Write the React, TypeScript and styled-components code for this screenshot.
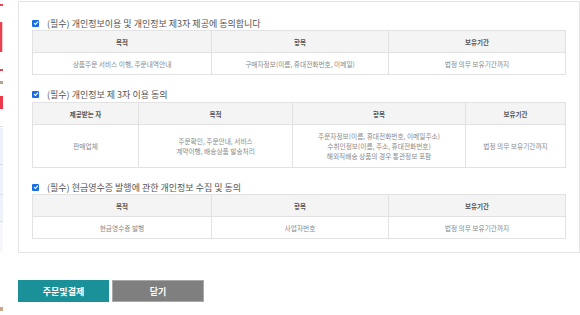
import React from "react";
import styled, { createGlobalStyle } from "styled-components";

const Global = createGlobalStyle`
  html, body { margin: 0; padding: 0; background: #fff; }
  body { font-family: "Noto Sans CJK KR", "Noto Sans", sans-serif; }
  * { box-sizing: border-box; }
`;

const Page = styled.div`
  display: flex;
  width: 580px;
  height: 315px;
  overflow: hidden;
`;

const Strip = styled.div`
  width: 3px;
  flex: none;
  display: flex;
  flex-direction: column;
  overflow: hidden;
`;

const StripBlock = styled.div<{ $h: number; $bg: string; $mt: number; $border?: string }>`
  height: ${(p) => p.$h}px;
  margin-top: ${(p) => p.$mt}px;
  background: ${(p) => p.$bg};
  border-left: ${(p) => (p.$border ? `2px solid ${p.$border}` : "none")};
  flex: none;
`;

const Main = styled.div`
  margin-left: 15px;
  width: 562px;
  padding-top: 1px;
  display: flex;
  flex-direction: column;
`;

const Panel = styled.div`
  border: 1px solid #e4e4e4;
  padding: 14px 13px 13px;
  display: flex;
  flex-direction: column;
  gap: 12px;
`;

const Section = styled.div`
  display: flex;
  flex-direction: column;
`;

const Title = styled.div<{ $gap: number }>`
  display: flex;
  align-items: center;
  height: 14px;
  gap: 8px;
  margin-bottom: ${(p) => p.$gap}px;
  font-size: 9px;
  color: #555;
  white-space: nowrap;
`;

const Check = styled.span`
  width: 7px;
  height: 7px;
  border-radius: 1px;
  background: #1a6fe6;
  display: inline-flex;
  align-items: center;
  justify-content: center;
  flex: none;
`;

const Table = styled.table`
  width: 533px;
  border-collapse: collapse;
  table-layout: fixed;
`;

const Col = styled.col<{ $w: number }>`
  width: ${(p) => p.$w}px;
`;

const Th = styled.th<{ $h: number }>`
  height: ${(p) => p.$h}px;
  background: #f4f4f4;
  border: 1px solid #e2e2e2;
  font-size: 6.5px;
  font-weight: 700;
  color: #555;
  text-align: center;
  padding: 0;
`;

const Td = styled.td<{ $h: number }>`
  height: ${(p) => p.$h}px;
  border: 1px solid #e2e2e2;
  font-size: 6.7px;
  line-height: 10px;
  color: #888;
  text-align: center;
  padding: 0;
  background: #fff;
`;

const Buttons = styled.div`
  display: flex;
  gap: 3px;
  margin-top: 27px;
`;

const Button = styled.button<{ $variant: "primary" | "close" }>`
  width: ${(p) => (p.$variant === "primary" ? 91 : 92)}px;
  height: 22px;
  border: 1px solid ${(p) => (p.$variant === "primary" ? "#1a9098" : "#a9a9a9")};
  background: ${(p) => (p.$variant === "primary" ? "#1a9098" : "#7f7f7f")};
  color: #fff;
  font-family: "Noto Sans CJK KR", sans-serif;
  font-size: 9px;
  font-weight: 700;
  padding: 0;
  cursor: pointer;
`;

const CheckBox = () => (
  <Check>
    <svg width="6" height="6" viewBox="0 0 10 10">
      <path d="M1.8 5.2 L4 7.4 L8.3 2.6" fill="none" stroke="#fff" strokeWidth="1.8" />
    </svg>
  </Check>
);

type Cell = React.ReactNode;

const InfoTable = ({
  cols,
  heads,
  cells,
  headH,
  bodyH,
}: {
  cols: number[];
  heads: string[];
  cells: Cell[];
  headH: number;
  bodyH: number;
}) => (
  <Table>
    <colgroup>
      {cols.map((w, i) => (
        <Col key={i} $w={w} />
      ))}
    </colgroup>
    <thead>
      <tr>
        {heads.map((h) => (
          <Th key={h} $h={headH}>
            {h}
          </Th>
        ))}
      </tr>
    </thead>
    <tbody>
      <tr>
        {cells.map((c, i) => (
          <Td key={i} $h={bodyH}>
            {c}
          </Td>
        ))}
      </tr>
    </tbody>
  </Table>
);

export default function App() {
  return (
    <>
      <Global />
      <Page>
        <Strip>
          <StripBlock $mt={4} $h={2} $bg="#e8414f" />
          <StripBlock $mt={16} $h={30} $bg="#f6c9cd" $border="#e8414f" />
          <StripBlock $mt={17} $h={2} $bg="#e8414f" />
          <StripBlock $mt={10} $h={3} $bg="#b9a48e" />
          <StripBlock $mt={12} $h={13} $bg="#ec3a4a" />
          <StripBlock $mt={17} $h={1} $bg="#dcdcdc" />
          <StripBlock $mt={1} $h={36} $bg="#eef2fb" />
          <StripBlock $mt={0} $h={1} $bg="#dadde4" />
          <StripBlock $mt={0} $h={29} $bg="#eef2fb" />
          <StripBlock $mt={0} $h={1} $bg="#dadde4" />
          <StripBlock $mt={0} $h={26} $bg="#eef2fb" />
          <StripBlock $mt={0} $h={1} $bg="#dadde4" />
          <StripBlock $mt={0} $h={30} $bg="#f6f7fa" />
          <StripBlock $mt={55} $h={4} $bg="#c9a58a" />
        </Strip>
        <Main>
          <Panel>
            <Section>
              <Title $gap={0}>
                <CheckBox />
                (필수) 개인정보이용 및 개인정보 제3자 제공에 동의합니다
              </Title>
              <InfoTable
                cols={[179, 177, 177]}
                heads={["목적", "항목", "보유기간"]}
                headH={22}
                bodyH={22}
                cells={[
                  "상품주문 서비스 이행, 주문내역안내",
                  "구매자정보(이름, 휴대전화번호, 이메일)",
                  "법정 의무 보유기간까지",
                ]}
              />
            </Section>
            <Section>
              <Title $gap={1}>
                <CheckBox />
                (필수) 개인정보 제 3자 이용 동의
              </Title>
              <InfoTable
                cols={[106, 154, 173, 100]}
                heads={["제공받는 자", "목적", "항목", "보유기간"]}
                headH={22}
                bodyH={43}
                cells={[
                  "판매업체",
                  <>
                    주문확인, 주문안내, 서비스
                    <br />
                    계약이행, 배송상품 발송처리
                  </>,
                  <>
                    주문자정보(이름, 휴대전화번호, 이메일주소)
                    <br />
                    수취인정보(이름, 주소, 휴대전화번호)
                    <br />
                    해외직배송 상품의 경우 통관정보 포함
                  </>,
                  "법정 의무 보유기간까지",
                ]}
              />
            </Section>
            <Section>
              <Title $gap={0}>
                <CheckBox />
                (필수) 현금영수증 발행에 관한 개인정보 수집 및 동의
              </Title>
              <InfoTable
                cols={[179, 177, 177]}
                heads={["목적", "항목", "보유기간"]}
                headH={22}
                bodyH={22}
                cells={["현금영수증 발행", "사업자번호", "법정 의무 보유기간까지"]}
              />
            </Section>
          </Panel>
          <Buttons>
            <Button $variant="primary">주문및결제</Button>
            <Button $variant="close">닫기</Button>
          </Buttons>
        </Main>
      </Page>
    </>
  );
}
